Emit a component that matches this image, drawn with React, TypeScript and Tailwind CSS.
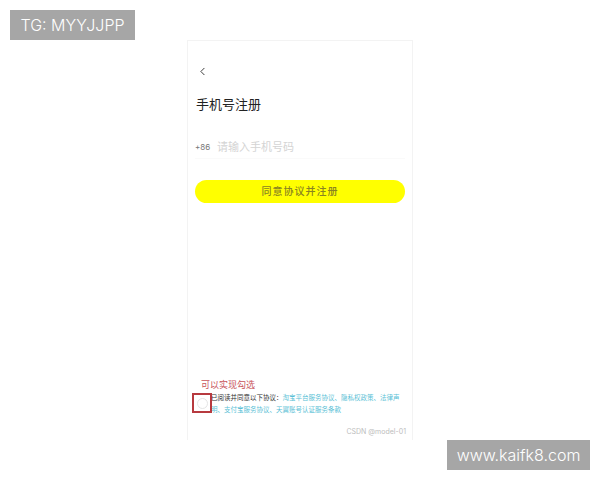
import { ChevronLeft } from "lucide-react";

const cjk = "font-['Inter','Noto_Sans_CJK_SC',sans-serif]";

export default function App() {
  return (
    <div className={`relative h-[480px] w-[600px] overflow-hidden bg-white ${cjk}`}>
      <div className="absolute left-[10px] top-[10px] flex h-[30px] w-[125px] items-center justify-center bg-[#a6a6a6] text-[16px] text-white font-light">
        TG: MYYJJPP
      </div>

      <div className="ml-[187px] pt-[40px]">
        <div className="relative flex h-[400px] w-[226px] flex-col border-x border-t border-[#f3f3f3] px-[7px]">
          <div className="mt-[24px] h-[14px]">
            <ChevronLeft className="ml-[1px] h-[13px] w-[13px] text-[#333]" strokeWidth={1.75} />
          </div>
          <h1 className="ml-[1px] mt-[16px] text-[13px] leading-[18px] text-[#222]">手机号注册</h1>

          <div className="mt-[23px] flex h-[23px] items-center border-b border-[#fafafa]">
            <span className="w-[22px] text-[8px] text-[#777]">+86</span>
            <span className="text-[11px] text-[#d4d4d4]">请输入手机号码</span>
          </div>

          <button className="mt-[21px] flex h-[23px] w-[210px] items-center justify-center rounded-full bg-[#ffff00] text-[10px] font-medium tracking-[1px] text-[#8a8420]">
            同意协议并注册
          </button>

          <div className="mt-auto pb-[24px]">
            <div className="ml-[6px] text-[9px] leading-[14px] text-[#c8535a]">可以实现勾选</div>
            <p className="pl-[16px] text-[6.5px] leading-[12px] text-[#5bbfd6]">
              <span className="text-[#333]">已阅读并同意以下协议：</span>
              淘宝平台服务协议、隐私权政策、法律声明、支付宝服务协议、天翼账号认证服务条款
            </p>
          </div>

          <div className="absolute bottom-[3px] right-[6px] text-[7px] text-[#bdbdbd]">CSDN @model-01</div>

          <div className="absolute left-[4px] top-[352px] flex h-[20px] w-[20px] items-center justify-center border-2 border-[#b73a3f]">
            <div className="h-[11px] w-[11px] rounded-full border border-[#e5e5e5]" />
          </div>
        </div>
      </div>

      <div className="absolute left-[447px] top-[440px] flex h-[30px] w-[143px] items-center justify-center bg-[#a6a6a6] text-[16px] text-white font-light">
        www.kaifk8.com
      </div>
    </div>
  );
}
